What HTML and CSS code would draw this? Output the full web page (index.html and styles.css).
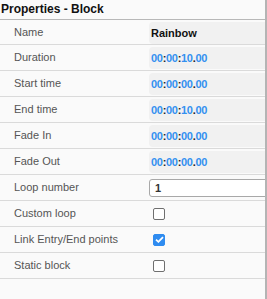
FILE: index.html
```html
<!DOCTYPE html>
<html lang="en">
<head>
  <meta charset="UTF-8">
  <title>Properties - Block</title>
  <link rel="stylesheet" href="styles.css">
</head>
<body>
<div class="panel">
  <div class="title">Properties - Block</div>
  <div class="row"><div class="label">Name</div><div class="value"><span class="box name">Rainbow</span></div></div>
  <div class="row"><div class="label">Duration</div><div class="value"><span class="box time">00<b>:</b>00<b>:</b>10<b>.</b>00</span></div></div>
  <div class="row"><div class="label">Start time</div><div class="value"><span class="box time">00<b>:</b>00<b>:</b>00<b>.</b>00</span></div></div>
  <div class="row"><div class="label">End time</div><div class="value"><span class="box time">00<b>:</b>00<b>:</b>10<b>.</b>00</span></div></div>
  <div class="row"><div class="label">Fade In</div><div class="value"><span class="box time">00<b>:</b>00<b>:</b>00<b>.</b>00</span></div></div>
  <div class="row"><div class="label">Fade Out</div><div class="value"><span class="box time">00<b>:</b>00<b>:</b>00<b>.</b>00</span></div></div>
  <div class="row"><div class="label">Loop number</div><div class="value"><input class="num" value="1"></div></div>
  <div class="row"><div class="label">Custom loop</div><div class="value"><span class="check"></span></div></div>
  <div class="row"><div class="label">Link Entry/End points</div><div class="value"><span class="check on">
    <svg width="9" height="7" viewBox="0 0 9 7"><path d="M1 3.6 L3.4 5.8 L8 1.2" fill="none" stroke="#fff" stroke-width="1.8"/></svg>
  </span></div></div>
  <div class="row"><div class="label">Static block</div><div class="value"><span class="check"></span></div></div>
</div>
</body>
</html>
```

FILE: styles.css
```css
html, body { margin: 0; padding: 0; background: #fafafa; }
body { font-family: "Liberation Sans", Arial, sans-serif; overflow: hidden; }
.panel { width: 265px; height: 299px; border-right: 2px solid #b4b4b4; overflow: hidden; }
.title { height: 19px; line-height: 19px; font-size: 12px; font-weight: bold; color: #111;
  padding-left: 1px; border-bottom: 1px solid #b8b8b8; }
.row { display: grid; grid-template-columns: 149px 1fr; height: 25px; border-bottom: 1px solid #dadada; }
.row:nth-child(2) { height: 24px; }
.label { font-size: 11px; color: #555; padding-left: 14px; line-height: 25px; white-space: nowrap; }
.value { display: flex; align-items: center; min-width: 0; }
.box { flex: 1; display: flex; align-items: center; align-self: stretch; margin: 2px 0 1px; padding-left: 2px;
  background: #f1f1f1; border-radius: 4px 0 0 4px; font-size: 11px; font-weight: bold; }
.name { color: #111; }
.time { color: #3390f0; letter-spacing: -0.3px; }
.time b { color: #222; }
.num { flex: 1; min-width: 0; height: 18px; box-sizing: border-box; margin: 1px -4px 0 0; padding: 0 5px;
  border: 1px solid #a8a8a8; border-radius: 3px; background: #fff;
  font: bold 11px "Liberation Sans", Arial, sans-serif; color: #333; }
.check { width: 12px; height: 12px; margin-left: 4px; box-sizing: border-box;
  border: 1.5px solid #6f6f6f; border-radius: 2px; background: #fff;
  display: flex; align-items: center; justify-content: center; }
.check.on { background: #2f8cf0; border-color: #2f8cf0; }
```
